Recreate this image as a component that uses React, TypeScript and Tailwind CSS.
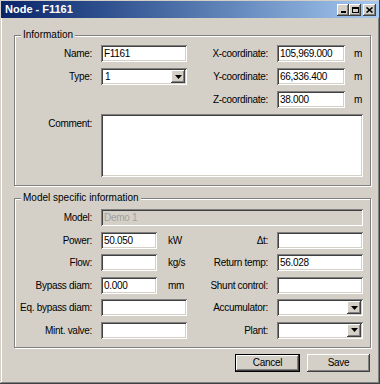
import React from "react";

const sunken =
  "shadow-[inset_1px_1px_0_#808080,inset_-1px_-1px_0_#ffffff,inset_2px_2px_0_#404040,inset_-2px_-2px_0_#d4d0c8]";
const raised =
  "shadow-[inset_-1px_-1px_0_#404040,inset_1px_1px_0_#ffffff,inset_-2px_-2px_0_#808080,inset_2px_2px_0_#d4d0c8]";

function TextBox({ value = "", w, disabled }: { value?: string; w: string; disabled?: boolean }) {
  return (
    <input
      defaultValue={value}
      disabled={disabled}
      className={`h-[17px] ${w} px-[3px] outline-none ${sunken} ${
        disabled ? "bg-[#d4d0c8] text-[#a0a0a0]" : "bg-white text-black"
      }`}
    />
  );
}

function Combo({ value = "", w }: { value?: string; w: string }) {
  return (
    <div className={`h-[17px] ${w} flex items-stretch bg-white p-[2px] ${sunken}`}>
      <span className="flex-1 pl-[2px] leading-[13px]">{value}</span>
      <span className={`w-[14px] bg-[#d4d0c8] flex items-center justify-center ${raised}`}>
        <svg width="7" height="4" viewBox="0 0 7 4">
          <path d="M0 0h7L3.5 4z" fill="#000" />
        </svg>
      </span>
    </div>
  );
}

function Label({ children, w }: { children: React.ReactNode; w: string }) {
  return <span className={`${w} shrink-0 text-right`}>{children}</span>;
}

function Group({ title, children }: { title: string; children: React.ReactNode }) {
  return (
    <fieldset className="border border-[#808080] shadow-[1px_1px_0_#ffffff,inset_1px_1px_0_#ffffff] pb-[8px]">
      <legend className="ml-[6px] px-[2px] bg-[#d4d0c8] leading-[12px] tracking-normal">{title}</legend>
      {children}
    </fieldset>
  );
}

function ModelRow({
  label,
  control,
  unit,
  rlabel,
  rcontrol,
}: {
  label: string;
  control: React.ReactNode;
  unit?: string;
  rlabel: string;
  rcontrol: React.ReactNode;
}) {
  return (
    <div className="flex h-[17px] items-center">
      <div className="w-[172px] flex items-center gap-[9px]">
        <Label w="w-[77px]">{label}</Label>
        {control}
        {unit && <span className="pl-[2px]">{unit}</span>}
      </div>
      <div className="flex items-center gap-[9px]">
        <Label w="w-[81px]">{rlabel}</Label>
        {rcontrol}
      </div>
    </div>
  );
}

export default function App() {
  return (
    <div
      className="w-[380px] h-[384px] bg-[#d4d0c8] flex flex-col text-[10px] tracking-[-0.3px] text-black shadow-[inset_-1px_-1px_0_#404040,inset_1px_1px_0_#d4d0c8,inset_-2px_-2px_0_#808080,inset_2px_2px_0_#ffffff]"
      style={{ fontFamily: '"Liberation Sans", Arial, sans-serif' }}
    >
      {/* title bar */}
      <div className="mx-[1px] mt-[1px] h-[17px] flex items-center justify-between pl-[4px] pr-[3px] bg-gradient-to-r from-[#0a246a] to-[#a6caf0]">
        <span className="text-white font-bold text-[11px] tracking-normal">Node - F1161</span>
        <div className="flex items-center">
          <span className={`w-[12px] h-[12px] bg-[#d4d0c8] flex items-end justify-center pb-[3px] ${raised}`}>
            <span className="w-[5px] h-[2px] bg-black" />
          </span>
          <span className={`w-[12px] h-[12px] bg-[#d4d0c8] flex items-center justify-center ${raised}`}>
            <span className="w-[7px] h-[6px] border border-black border-t-2" />
          </span>
          <span className={`ml-[2px] w-[13px] h-[12px] bg-[#d4d0c8] flex items-center justify-center ${raised}`}>
            <svg width="7" height="6" viewBox="0 0 7 6">
              <path d="M0.5 0.5l6 5M6.5 0.5l-6 5" stroke="#000" strokeWidth="1.6" />
            </svg>
          </span>
        </div>
      </div>

      <div className="flex-1 pl-[14px] pr-[9px] pt-[11px] flex flex-col">
        <Group title="Information">
          <div className="flex pt-[4px]">
            <div className="w-[172px] flex flex-col gap-[6px]">
              <div className="flex items-center gap-[9px] h-[17px]">
                <Label w="w-[77px]">Name:</Label>
                <TextBox value="F1161" w="w-[86px]" />
              </div>
              <div className="flex items-center gap-[9px] h-[17px]">
                <Label w="w-[77px]">Type:</Label>
                <Combo value="1" w="w-[86px]" />
              </div>
            </div>
            <div className="flex flex-col gap-[6px]">
              {[
                ["X-coordinate:", "105,969.000"],
                ["Y-coordinate:", "66,336.400"],
                ["Z-coordinate:", "38.000"],
              ].map(([l, v]) => (
                <div key={l} className="flex items-center gap-[9px] h-[17px]">
                  <Label w="w-[81px]">{l}</Label>
                  <TextBox value={v} w="w-[68px]" />
                  <span>m</span>
                </div>
              ))}
            </div>
          </div>
          <div className="flex gap-[9px] mt-[6px]">
            <span className="w-[77px] text-right pt-[2px]">Comment:</span>
            <textarea className={`w-[262px] h-[63px] bg-white resize-none outline-none ${sunken}`} />
          </div>
        </Group>

        <div className="mt-[6px]">
          <Group title="Model specific information">
            <div className="pt-[5px] flex flex-col gap-[5.6px]">
              <div className="flex h-[17px] items-center gap-[9px]">
                <Label w="w-[77px]">Model:</Label>
                <TextBox value="Demo 1" w="w-[262px]" disabled />
              </div>
              <ModelRow
                label="Power:"
                control={<TextBox value="50.050" w="w-[56px]" />}
                unit="kW"
                rlabel="Δt:"
                rcontrol={<TextBox w="w-[86px]" />}
              />
              <ModelRow
                label="Flow:"
                control={<TextBox w="w-[56px]" />}
                unit="kg/s"
                rlabel="Return temp:"
                rcontrol={<TextBox value="56.028" w="w-[86px]" />}
              />
              <ModelRow
                label="Bypass diam:"
                control={<TextBox value="0.000" w="w-[56px]" />}
                unit="mm"
                rlabel="Shunt control:"
                rcontrol={<TextBox w="w-[86px]" />}
              />
              <ModelRow
                label="Eq. bypass diam:"
                control={<TextBox w="w-[86px]" />}
                rlabel="Accumulator:"
                rcontrol={<Combo w="w-[86px]" />}
              />
              <ModelRow
                label="Mint. valve:"
                control={<TextBox w="w-[86px]" />}
                rlabel="Plant:"
                rcontrol={<Combo w="w-[86px]" />}
              />
            </div>
          </Group>
        </div>

        <div className="mt-[6px] flex justify-end gap-[7px] pr-[1px]">
          <button className="w-[65px] h-[18px] border border-black bg-[#d4d0c8] shadow-[inset_-1px_-1px_0_#404040,inset_1px_1px_0_#ffffff,inset_-2px_-2px_0_#808080]">
            Cancel
          </button>
          <button className={`w-[63px] h-[18px] bg-[#d4d0c8] ${raised}`}>Save</button>
        </div>
      </div>
    </div>
  );
}
